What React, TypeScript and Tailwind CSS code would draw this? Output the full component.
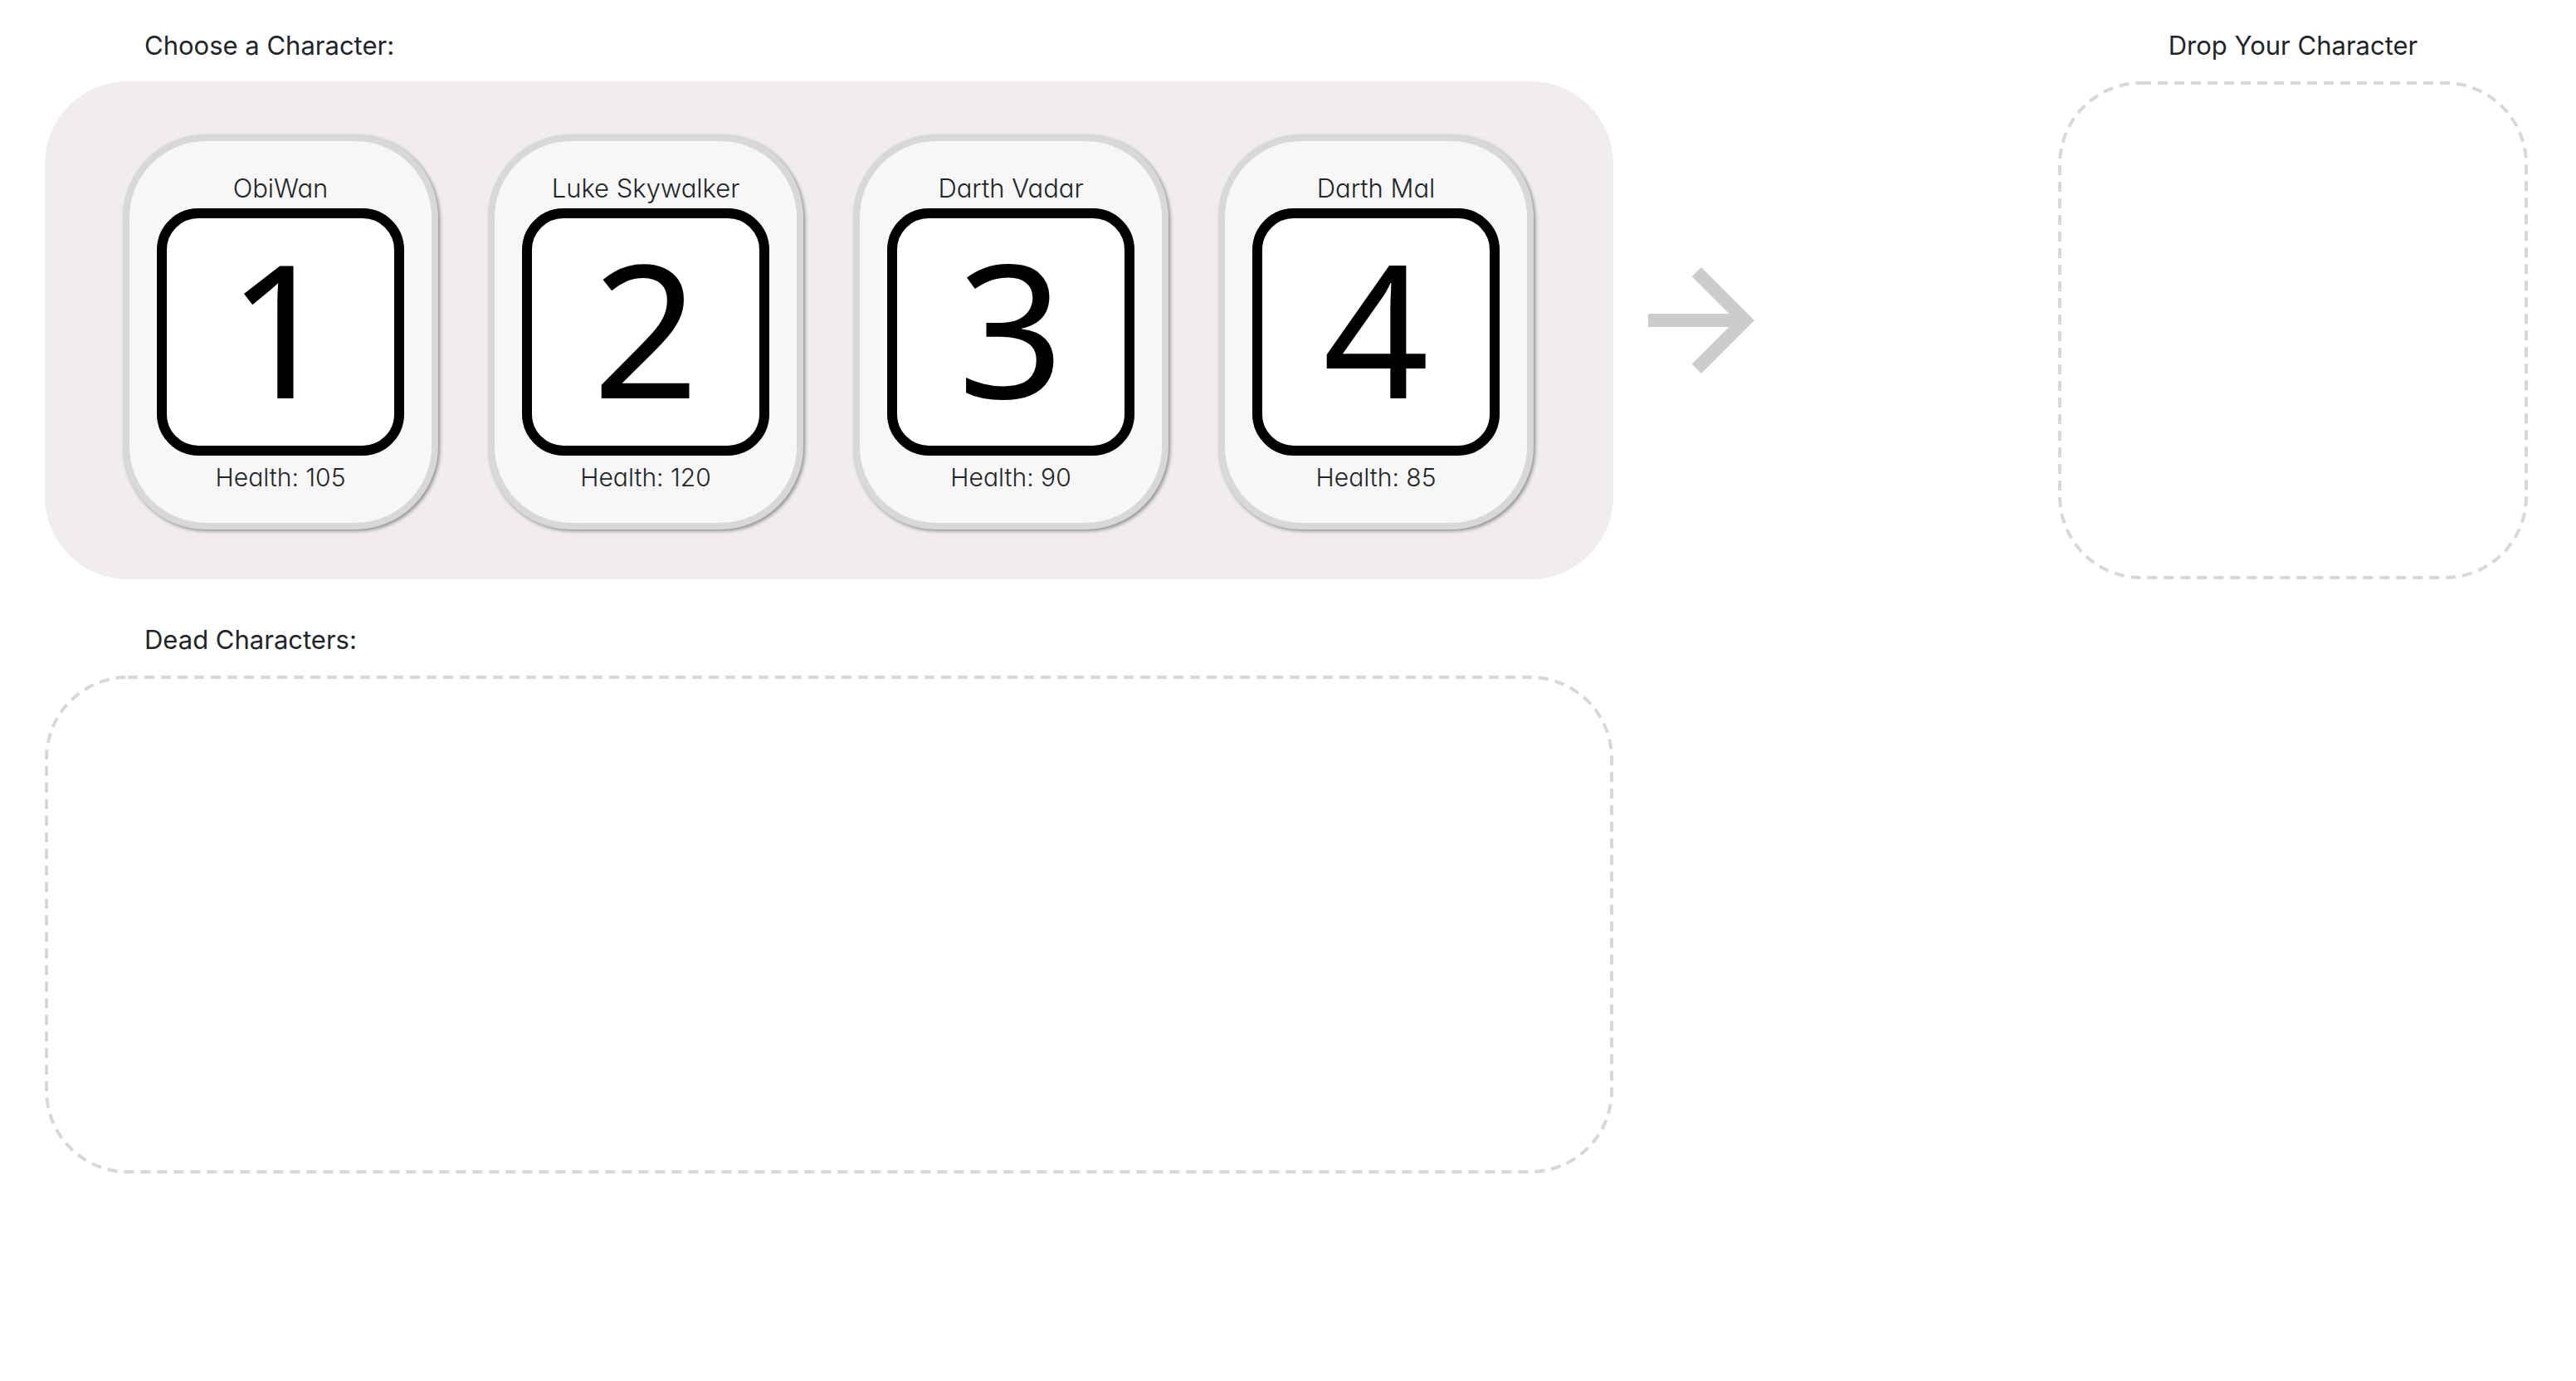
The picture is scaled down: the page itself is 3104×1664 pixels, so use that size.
import { MdArrowForward } from "react-icons/md";

type Character = { id: number; name: string; health: number };

const characters: Character[] = [
  { id: 1, name: "ObiWan", health: 105 },
  { id: 2, name: "Luke Skywalker", health: 120 },
  { id: 3, name: "Darth Vadar", health: 90 },
  { id: 4, name: "Darth Mal", health: 85 },
];

function CharacterCard({ character }: { character: Character }) {
  return (
    <li
      draggable
      className="flex w-[380px] cursor-grab flex-col items-center rounded-[100px] border-8 border-[#d8d8d8] bg-[#f7f7f7] pt-[34px] pb-[30px] font-['Inter',sans-serif] font-light shadow-[2px_2px_4px_rgba(0,0,0,0.4)] [font-feature-settings:'cv11']"
    >
      <span className="leading-[46px]">{character.name}</span>
      <div className="m-px flex size-[298px] items-center justify-center rounded-[50px] border-12 border-black bg-white pb-3 font-['Noto_Sans',sans-serif] text-[224px] leading-none font-normal text-black">
        {character.id}
      </div>
      <span className="text-[30px] leading-[50px]">Health: {character.health}</span>
    </li>
  );
}

/* Dashed outline with 12px dashes and 8px gaps, which border-style cannot set. */
function DropZone({ label }: { label: string }) {
  return (
    <div role="region" aria-label={label} className="h-[600px] rounded-[100px] p-0.5">
      <svg className="size-full overflow-visible" aria-hidden="true">
        <rect
          width="100%"
          height="100%"
          rx="98"
          fill="none"
          stroke="#d8d8d8"
          strokeWidth="4"
          strokeDasharray="12 8"
        />
      </svg>
    </div>
  );
}

export default function App() {
  return (
    <main className="grid min-h-screen grid-cols-[1890fr_536fr_566fr] content-start bg-white pt-8 pr-[58px] pl-[54px] font-['Inter',sans-serif] text-[31px] leading-[46px] text-[#212529]">
      <div className="flex flex-col">
        <section className="flex flex-col gap-5">
          <h2 className="pl-[120px]">Choose a Character:</h2>
          <ul className="flex h-[600px] justify-between rounded-[100px] bg-[#f0edec] pt-16 pr-24 pb-[60px] pl-[94px]">
            {characters.map((character) => (
              <CharacterCard key={character.id} character={character} />
            ))}
          </ul>
        </section>
        <section className="mt-[50px] flex flex-col gap-5">
          <h2 className="pl-[120px]">Dead Characters:</h2>
          <DropZone label="Dead characters" />
        </section>
      </div>

      <div className="pt-[258px] pl-2.5">
        <MdArrowForward className="size-48 text-[#cccccc]" aria-hidden="true" />
      </div>

      <section className="flex flex-col gap-5">
        <h2 className="text-center">Drop Your Character</h2>
        <DropZone label="Drop your character" />
      </section>
    </main>
  );
}
